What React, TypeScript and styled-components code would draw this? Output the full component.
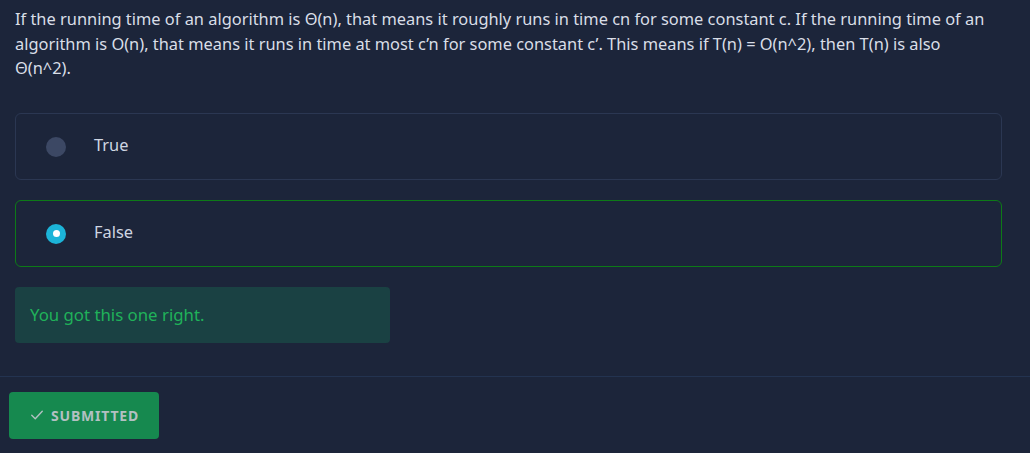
import React from "react";
import styled, { createGlobalStyle } from "styled-components";

const GlobalStyle = createGlobalStyle`
    html, body {
        margin: 0;
        padding: 0;
        background: #1c253a;
    }
    body {
        font-family: "Noto Sans", "Open Sans", sans-serif;
        color: #d5dbe5;
    }
`;

const Page = styled.div`
    display: flex;
    flex-direction: column;
    min-height: 453px;
    background: #1c253a;
`;

const Content = styled.div`
    display: flex;
    flex-direction: column;
    padding: 7px 28px 33px 15px;
`;

const Question = styled.p`
    max-width: 975px;
    margin: 0 0 32px;
    font-size: 16.4px;
    line-height: 24.5px;
    color: #d9dee7;
`;

const Options = styled.div`
    display: flex;
    flex-direction: column;
    gap: 20px;
`;

const Option = styled.label<{ $correct?: boolean }>`
    display: flex;
    align-items: center;
    gap: 28px;
    height: 67px;
    box-sizing: border-box;
    padding: 0 0 0 30px;
    border: 1px solid ${p => (p.$correct ? "#0d7a17" : "#2b3752")};
    border-radius: 6px;
    font-size: 16.4px;
    color: #cfd6e2;
    cursor: pointer;
`;

const Radio = styled.span<{ $checked?: boolean }>`
    display: flex;
    align-items: center;
    justify-content: center;
    width: 20px;
    height: 20px;
    border-radius: 50%;
    background: ${p => (p.$checked ? "#1cb4d8" : "#3c4864")};
    flex-shrink: 0;
    margin-top: 1px;

    &::after {
        content: "";
        display: ${p => (p.$checked ? "block" : "none")};
        width: 7px;
        height: 7px;
        border-radius: 50%;
        background: #ffffff;
    }
`;

const OptionText = styled.span`
    margin-top: -4px;
`;

const Feedback = styled.div`
    display: flex;
    align-items: center;
    width: 375px;
    height: 56px;
    box-sizing: border-box;
    margin-top: 20px;
    padding: 0 15px;
    border-radius: 4px;
    background: #1a4143;
    color: #20b25a;
    font-size: 16.8px;
`;

const Footer = styled.div`
    border-top: 1px solid #233350;
    padding: 15px 9px;
`;

const SubmitButton = styled.button`
    display: inline-flex;
    align-items: center;
    gap: 7px;
    height: 47px;
    padding: 0 20px 0 21px;
    border: none;
    border-radius: 4px;
    background: #16894f;
    color: #b3c0c2;
    font-family: "Noto Sans", sans-serif;
    font-weight: 700;
    font-size: 14px;
    letter-spacing: 0.8px;
    cursor: default;

    & svg {
        width: 14px;
        height: 14px;
    }
`;

const Check = () => (
    <svg viewBox="0 0 24 24" fill="none" stroke="currentColor" strokeWidth="2.4" strokeLinecap="round" strokeLinejoin="round">
        <path d="M3 12.5l6 6L21 5.5" />
    </svg>
);

const options = [
    { label: "True", checked: false },
    { label: "False", checked: true },
];

export default function App() {
    return <Page>
        <GlobalStyle />
        <Content>
            <Question>
                If the running time of an algorithm is Θ(n), that means it roughly runs in time cn for some constant c. If the running time of an algorithm is O(n), that means it runs in time at most c’n for some constant c’. This means if T(n) = O(n^2), then T(n) is also Θ(n^2).
            </Question>
            <Options>
                {options.map(o => (
                    <Option key={o.label} $correct={o.checked}>
                        <Radio $checked={o.checked} />
                        <OptionText>{o.label}</OptionText>
                    </Option>
                ))}
            </Options>
            <Feedback>You got this one right.</Feedback>
        </Content>
        <Footer>
            <SubmitButton><Check />SUBMITTED</SubmitButton>
        </Footer>
    </Page>;
}
